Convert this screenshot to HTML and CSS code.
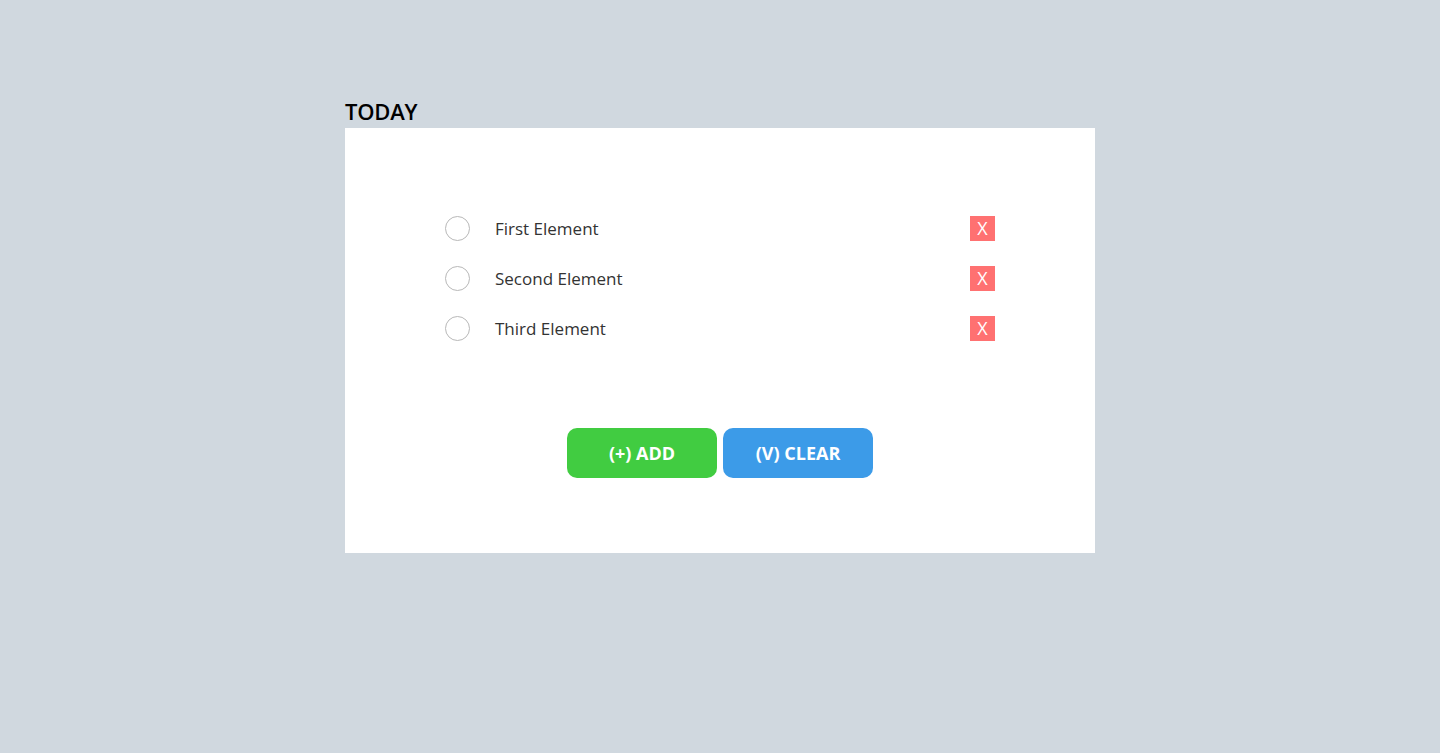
FILE: index.html
```html
<!DOCTYPE html>
<html lang="en">
<head>
<meta charset="utf-8">
<title>Today</title>
<link rel="stylesheet" href="styles.css">
</head>
<body>
<main class="wrap">
  <h1 class="title">TODAY</h1>
  <section class="card">
    <ul class="list">
      <li class="item"><span class="check"></span><span class="label">First Element</span><button class="del">X</button></li>
      <li class="item"><span class="check"></span><span class="label">Second Element</span><button class="del">X</button></li>
      <li class="item"><span class="check"></span><span class="label">Third Element</span><button class="del">X</button></li>
    </ul>
    <div class="actions">
      <button class="btn btn-add">(+) ADD</button>
      <button class="btn btn-clear">(V) CLEAR</button>
    </div>
  </section>
</main>
</body>
</html>
```

FILE: styles.css
```css
html, body {
  margin: 0;
  padding: 0;
}
body {
  background: #d0d8df;
  font-family: "Open Sans", "Noto Sans", sans-serif;
  min-height: 753px;
}
.wrap {
  width: 750px;
  margin: 0 auto;
  padding-top: 94px;
}
.title {
  margin: 0;
  font-size: 22px;
  font-weight: 600;
  line-height: 34px;
  color: #000;
  letter-spacing: -0.2px;
}
.card {
  background: #fff;
  padding: 88px 100px 75px;
}
.list {
  list-style: none;
  margin: 0;
  padding: 0;
  display: flex;
  flex-direction: column;
  gap: 25px;
}
.item {
  display: flex;
  align-items: center;
  height: 25px;
}
.check {
  width: 23px;
  height: 23px;
  border: 1px solid #b8b8b8;
  border-radius: 50%;
  flex: none;
}
.label {
  margin-left: 25px;
  flex: 1;
  font-size: 17px;
  line-height: 24px;
  color: #333;
}
.del {
  width: 25px;
  height: 25px;
  border: 0;
  padding: 0;
  background: #ff7171;
  color: #fff;
  font-family: inherit;
  font-size: 18px;
  line-height: 25px;
}
.actions {
  display: flex;
  justify-content: center;
  gap: 6px;
  margin-top: 87px;
}
.btn {
  width: 150px;
  height: 50px;
  border: 0;
  border-radius: 10px;
  color: #fff;
  font-family: inherit;
  font-size: 18px;
  font-weight: 700;
}
.btn-add {
  background: #41cc41;
}
.btn-clear {
  background: #3c9be8;
}
```
